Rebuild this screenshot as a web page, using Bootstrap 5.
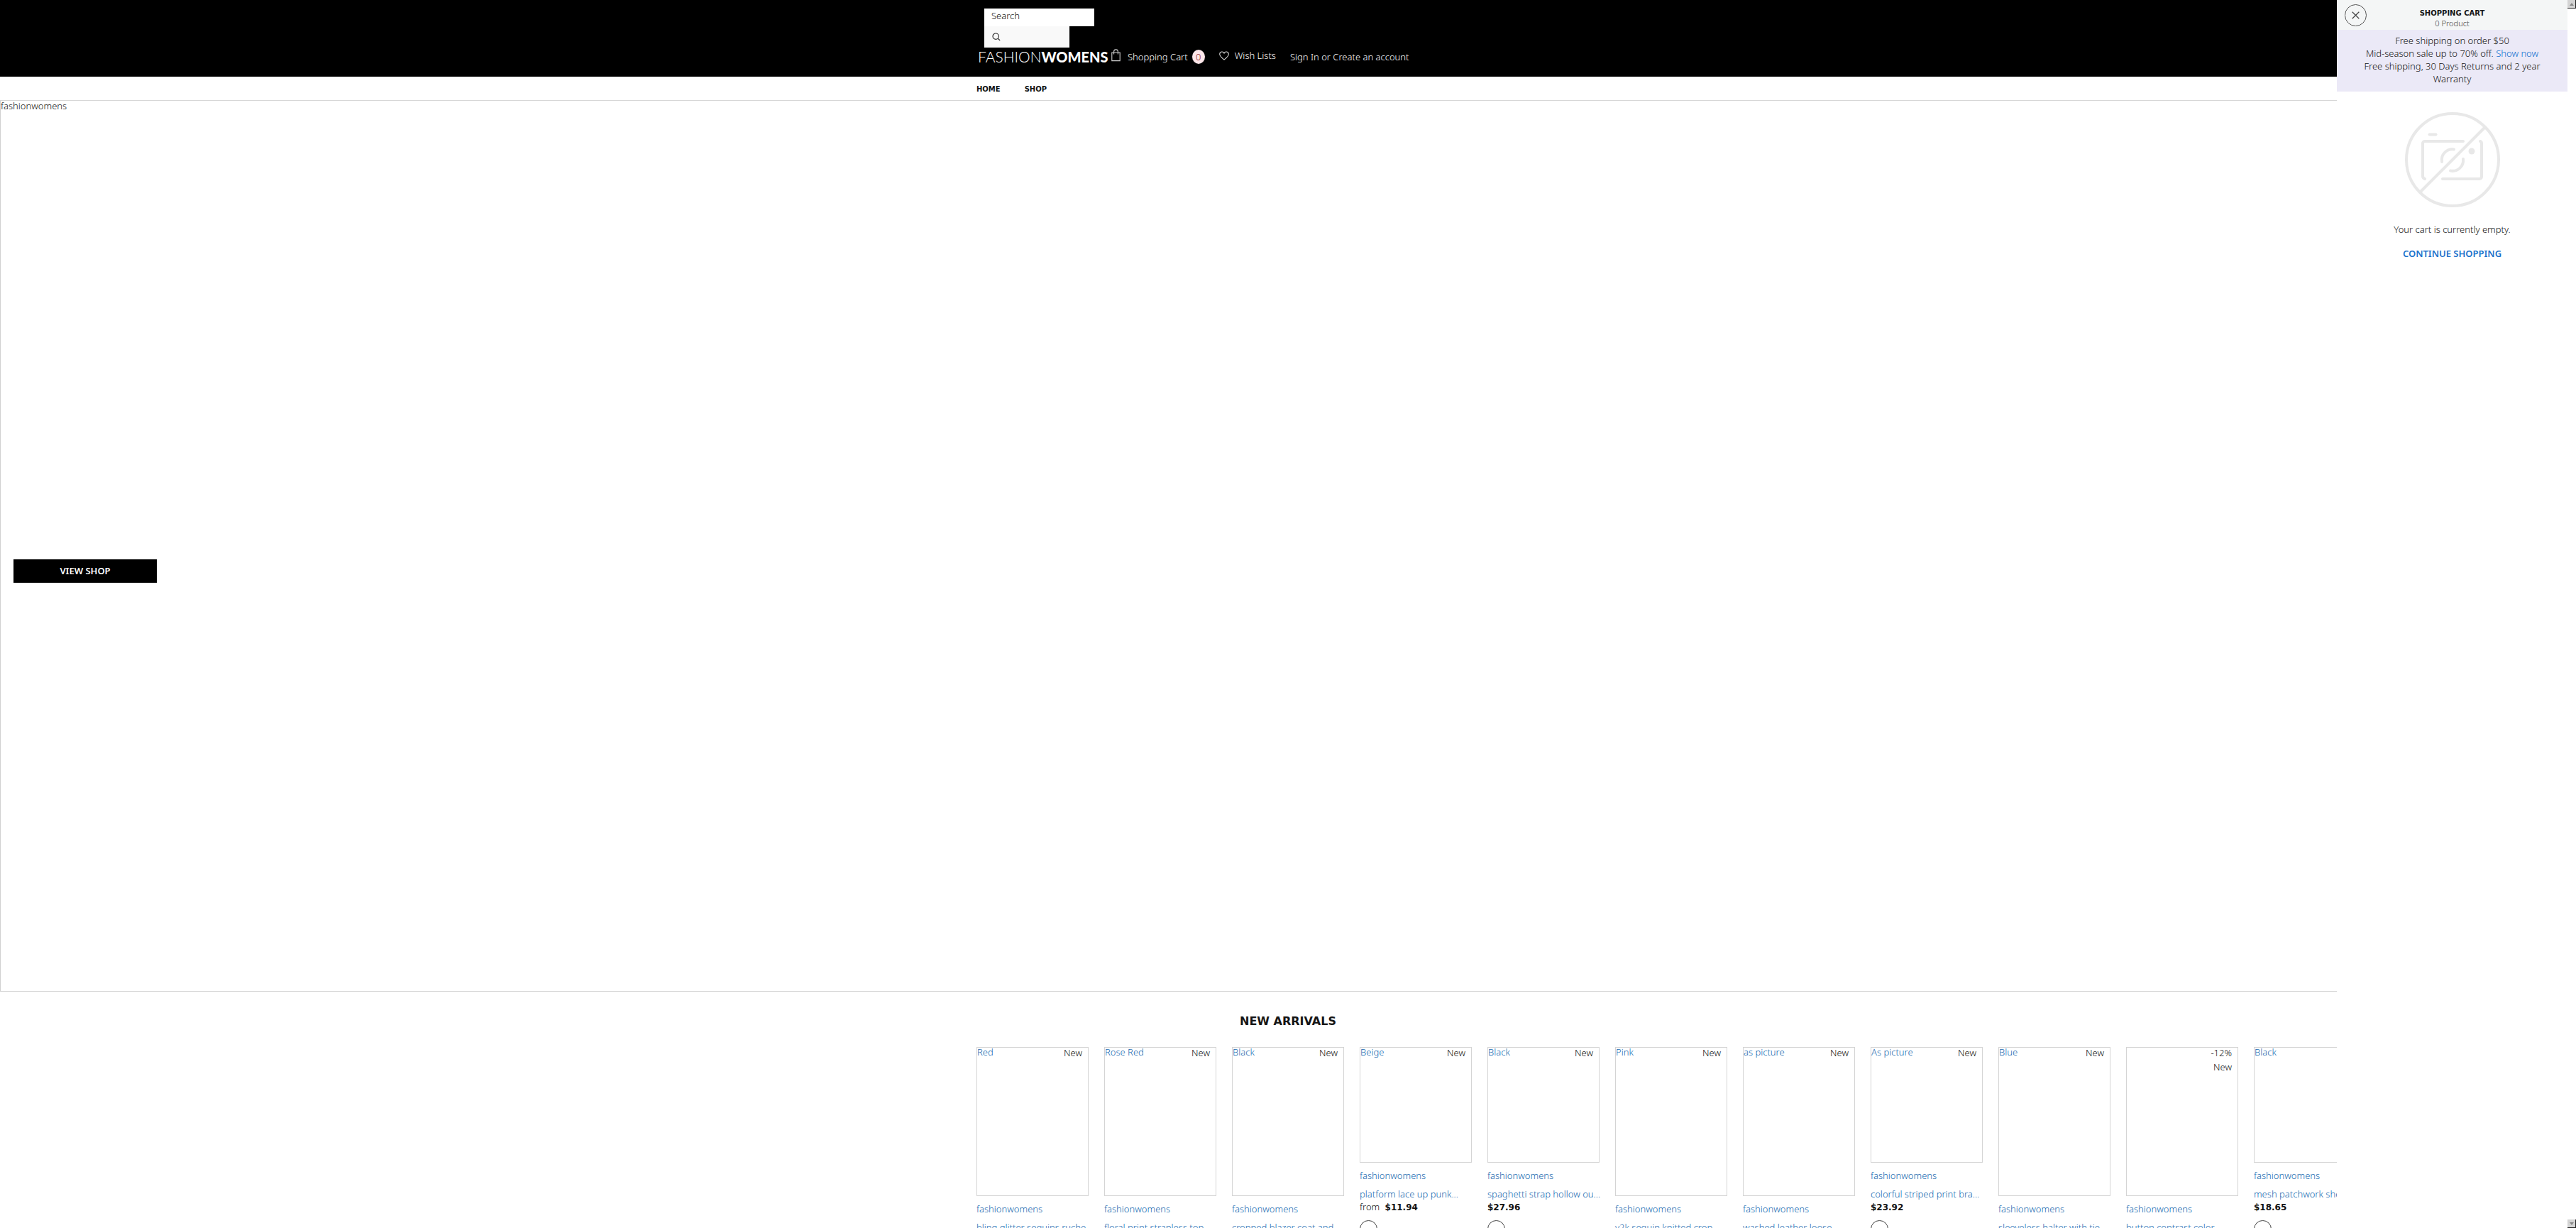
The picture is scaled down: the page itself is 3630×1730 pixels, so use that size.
<!DOCTYPE html>
<html lang="en">
<head>
<meta charset="utf-8">
<meta name="viewport" content="width=device-width, initial-scale=1">
<title>Fashionwomens</title>
<link rel="stylesheet" href="https://cdn.jsdelivr.net/npm/bootstrap@5.3.0/dist/css/bootstrap.min.css">
<script src="https://cdn.jsdelivr.net/npm/bootstrap@5.3.0/dist/js/bootstrap.bundle.min.js"></script>
<style>
  html, body { height: 100%; overflow: hidden; }
  body { font: 300 13px/18px "Noto Sans", sans-serif; color: #111; background: #fff; }
  a { color: #1669b0; text-decoration: none; }
  .wrap { max-width: 878px; }
  .site-top { background: #000; height: 108px; padding-top: 12px; }
  .site-top a, .account { color: #fff; }
  .finder { padding-left: 11px; }
  .finder input { width: 155px; height: 25px; padding: 0 10px 5px; line-height: 18px; font-size: 13px; font-weight: 300; background: #fff; color: #111; }
  .finder input::placeholder { color: #111; opacity: 1; }
  .finder button { width: 120px; height: 30px; padding: 0 0 4px 11px; background: #f9f9f9; }
  .brand { font: 300 20px/26px Lato, sans-serif; padding-left: 2px; width: 190px; }
  .brand span { font-size: 21px; }
  .brand b { font-weight: 900; }
  .cart-link { gap: 6px; }
  .tally { width: 18px; height: 20px; line-height: 20px; background: #fde6e9; color: #8d1a22; }
  .menu-bar { height: 34px; border-bottom: 1px solid #d6d6d6; padding-top: 2px; font: 700 10px/18px "DejaVu Sans", sans-serif; }
  .menu-bar a { color: #111; }
  .menu-gap { gap: 34px; }
  .hero { aspect-ratio: 3630 / 1255; border: 1px solid #d0d0d0; border-top: 0; line-height: 14px; }
  .hero-btn { left: 18px; margin-top: 19px; width: 202px; height: 33px; background: #000; color: #fff; font-weight: 600; line-height: 32px; }
  .section-title { font: 700 16px/24px "DejaVu Sans", sans-serif; color: #151515; padding: 30px 0 24px; }
  .strip { gap: 22px; }
  .item { width: 158px; }
  .photo { height: 210px; border: 1px solid #d4d4d4; line-height: 12px; }
  .photo.squat { height: 163px; }
  .tags { top: 0; right: 8px; line-height: 20px; margin-top: -3px; }
  .maker { padding-top: 9px; }
  .name { padding-top: 8px; }
  .price { color: #111; font: 700 12px/18px "DejaVu Sans", sans-serif; }
  .swatch { width: 25px; height: 25px; border: 1px solid #444; margin-top: 9px; }
  .drawer { width: 337px; background: #fff; }
  .drawer-main { width: 325px; }
  .drawer-head { height: 42px; background: #f4f6f6; padding-top: 12px; line-height: 13px; font-size: 11px; color: #444; }
  .drawer-head h2 { font: 700 10px/14px "DejaVu Sans", sans-serif; color: #151515; }
  .close-btn { left: 11px; top: 6px; width: 31px; height: 31px; border: 1px solid #555; }
  .promo { background: #ebe9f7; padding: 6px 30px 9px; }
  .promo a { color: #0a6fd0; }
  .more { color: #1a72cc; font-weight: 600; }
  .empty-art { padding-top: 28px; padding-bottom: 21px; }
  .scroll-rail button { width: 12px; height: 12px; background: #d4d4d4; border: 0; border-right: 1px solid #222; border-bottom: 1px solid #222; }
</style>
</head>
<body>
<header>
  <div class="site-top">
    <div class="wrap mx-auto">
      <form class="finder d-flex flex-column align-items-start">
        <input type="text" class="border-0 rounded-0" placeholder="Search" aria-label="Search">
        <button type="button" class="border-0 text-start" aria-label="Search">
          <svg width="12" height="12" viewBox="0 0 12 12" fill="none" stroke="#333" stroke-width="1.2"><circle cx="5.2" cy="5.2" r="4.2"/><path d="M8.2 8.2 11.2 11"/></svg>
        </button>
      </form>
      <div class="d-flex align-items-center">
        <a class="brand text-nowrap" href="#"><span>FASHION</span><b>WOMENS</b></a>
        <a class="cart-link d-flex align-items-center me-3" href="#">
          <svg class="me-1 mb-1" width="13" height="18" viewBox="0 0 13 18" fill="none" stroke="#d0d0d0" stroke-width="1.1"><path d="M.8 5h11.4v11.6H.8zM3.6 7.6V3.8a2.9 2.9 0 0 1 5.8 0v3.8"/></svg>
          <span>Shopping Cart</span>
          <span class="tally rounded-circle text-center">0</span>
        </a>
        <a class="d-flex align-items-center pb-1 ms-1 me-3" href="#">
          <svg class="me-2" width="14" height="13" viewBox="0 0 14 13" fill="none" stroke="#d0d0d0" stroke-width="1.1"><path d="M7 12.2C2.2 8.2.7 6.4.7 4.2a3.3 3.3 0 0 1 6.3-1.3 3.3 3.3 0 0 1 6.3 1.3c0 2.2-1.5 4-6.3 8z"/></svg>
          Wish Lists
        </a>
        <span class="account ms-1"><a href="#">Sign In</a> or <a href="#">Create an account</a></span>
      </div>
    </div>
  </div>
  <nav class="menu-bar">
    <div class="wrap mx-auto h-100 d-flex align-items-center menu-gap">
      <a href="#">HOME</a><a href="#">SHOP</a>
    </div>
  </nav>
</header>
<main>
  <section class="hero position-relative">
    fashionwomens
    <a class="hero-btn position-absolute top-50 text-center" href="#">VIEW SHOP</a>
  </section>
  <section class="wrap mx-auto">
    <h2 class="section-title text-center mb-0">NEW ARRIVALS</h2>
    <div class="strip d-flex align-items-start" id="strip"></div>
  </section>
</main>
<aside class="drawer position-fixed top-0 end-0 h-100 d-flex text-center">
  <div class="drawer-main">
    <div class="drawer-head position-relative">
      <button type="button" class="close-btn position-absolute rounded-circle bg-transparent p-0 d-flex align-items-center justify-content-center" aria-label="Close">
        <svg width="11" height="11" viewBox="0 0 11 11" stroke="#444" stroke-width="1.3"><path d="M.7.7l9.6 9.6M10.3.7.7 10.3"/></svg>
      </button>
      <h2 class="mb-0">SHOPPING CART</h2>
      <div>0 Product</div>
    </div>
    <div class="promo">
      <div>Free shipping on order $50</div>
      <div>Mid-season sale up to 70% off. <a href="#">Show now</a></div>
      <div>Free shipping, 30 Days Returns and 2 year Warranty</div>
    </div>
    <div class="empty-art">
      <svg class="d-block mx-auto" width="136" height="136" viewBox="0 0 136 136" fill="none" stroke="#e8e8e8" stroke-width="4" stroke-linecap="round">
        <circle cx="68" cy="68" r="65"/>
        <path d="M23 113 113 23"/>
        <path d="M35.5 32.5h9"/>
        <path d="M83 42H29a3 3 0 0 0-3 3v46q0 3 3 4"/>
        <path d="M107 42q2 .5 2 3v47a3 3 0 0 1-3 3H54"/>
        <path d="M53 71a15 15 0 0 1 17-17.5M83 67a15 15 0 0 1-18 16.5"/>
        <circle cx="95" cy="56" r="4.5" fill="#e8e8e8" stroke="none"/>
      </svg>
    </div>
    <p class="mb-0 pb-3">Your cart is currently empty.</p>
    <a class="more" href="#">CONTINUE SHOPPING</a>
  </div>
  <div class="scroll-rail d-flex flex-column justify-content-between">
    <button type="button" class="p-0 d-flex align-items-center justify-content-center" aria-label="Scroll up"><svg width="6" height="4" viewBox="0 0 6 4" fill="#888"><path d="M0 4 3 0l3 4z"/></svg></button>
    <button type="button" class="p-0 d-flex align-items-center justify-content-center" aria-label="Scroll down"><svg width="6" height="4" viewBox="0 0 6 4" fill="#888"><path d="M0 0l3 4 3-4z"/></svg></button>
  </div>
</aside>
<script>
  // colour label, tags, product name, price, squat photo
  const items = [
    ['Red', 'New', 'bling glitter sequins ruche...', '', 0],
    ['Rose Red', 'New', 'floral print strapless top...', '', 0],
    ['Black', 'New', 'cropped blazer coat and...', '', 0],
    ['Beige', 'New', 'platform lace up punk...', 'from <b class="price ms-1">$11.94</b>', 1],
    ['Black', 'New', 'spaghetti strap hollow ou...', '<b class="price">$27.96</b>', 1],
    ['Pink', 'New', 'y2k sequin knitted crop...', '', 0],
    ['as picture', 'New', 'washed leather loose...', '', 0],
    ['As picture', 'New', 'colorful striped print bra...', '<b class="price">$23.92</b>', 1],
    ['Blue', 'New', 'sleeveless halter with tie...', '', 0],
    ['', '-12%<br>New', 'button contrast color...', '', 0],
    ['Black', 'New', 'mesh patchwork sheer...', '<b class="price">$18.65</b>', 1]
  ];
  document.getElementById('strip').innerHTML = items.map(([colour, tags, name, price, squat]) => `
    <article class="item flex-shrink-0">
      <div class="photo position-relative ${squat ? 'squat' : ''}">
        <a href="#">${colour}</a>
        <div class="tags position-absolute text-end">${tags}</div>
      </div>
      <div class="maker"><a href="#">fashionwomens</a></div>
      <div class="name text-nowrap"><a href="#">${name}</a></div>
      ${price ? `<div>${price}</div><div class="swatch rounded-circle"></div>` : ''}
    </article>`).join('');
</script>
</body>
</html>
